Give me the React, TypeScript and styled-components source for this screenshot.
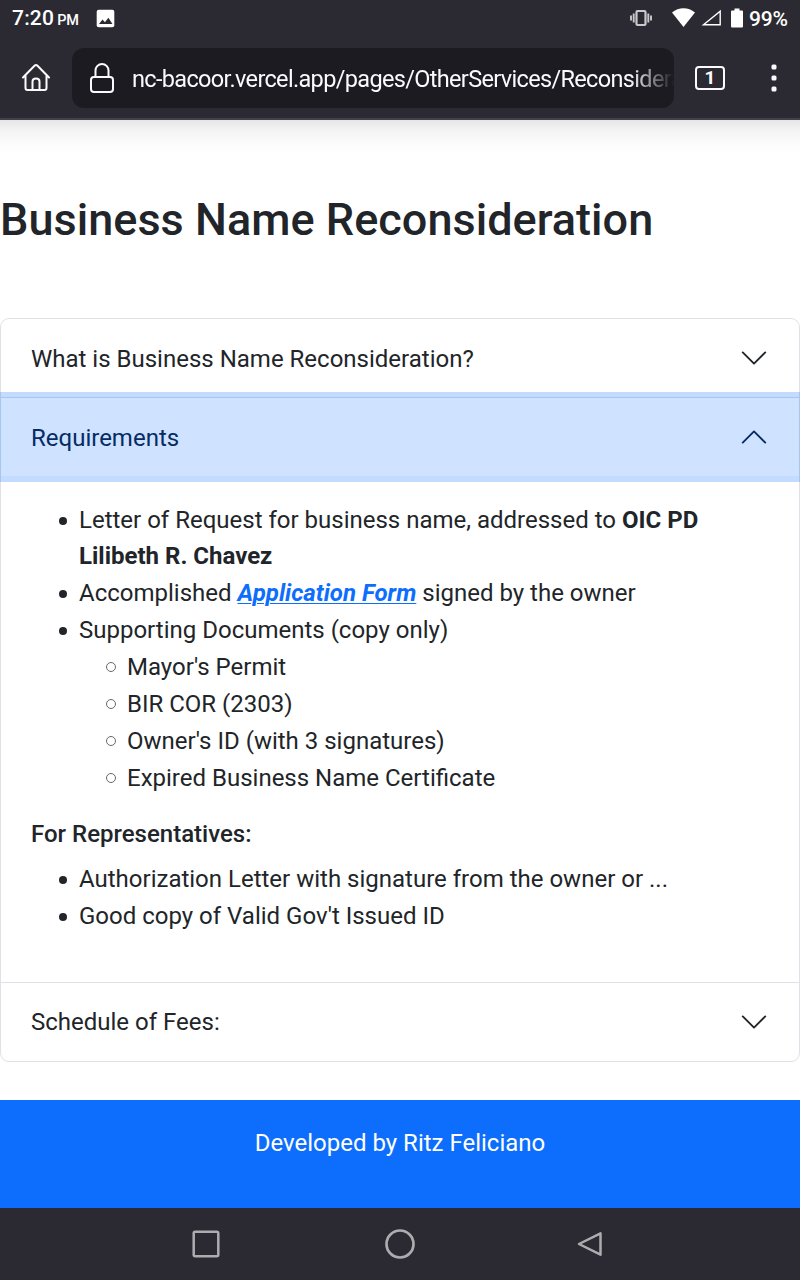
import React from 'react';
import styled, { createGlobalStyle } from 'styled-components';

const GlobalStyle = createGlobalStyle`
  *, *::before, *::after { box-sizing: border-box; }
  body {
    margin: 0;
    background: #fff;
    color: #212529;
    font-family: Roboto, sans-serif;
    font-size: 24px;
    line-height: 36px;
  }
`;

const Screen = styled.div`
  display: flex;
  flex-direction: column;
  width: 800px;
  height: 1280px;
  overflow: hidden;
`;

const StatusBar = styled.div`
  display: flex;
  align-items: center;
  height: 36px;
  padding: 0 11px 0 12px;
  background: #2b2a33;
  color: #fff;
  flex: none;
`;

const Clock = styled.div`
  width: 84px;
  font-size: 21px;
  font-weight: 500;
  line-height: 36px;
  padding-top: 3px;
  letter-spacing: 0.2px;
  white-space: nowrap;
`;

const Meridiem = styled.span`
  font-size: 14.5px;
  margin-left: 3px;
  letter-spacing: -0.2px;
`;

const StatusIcons = styled.div`
  display: flex;
  align-items: center;
  margin-left: auto;
  & > svg:nth-of-type(2) { margin-left: 20px; }
  & > svg:nth-of-type(3) { margin-left: 6px; }
  & > svg:nth-of-type(4) { margin-left: 9px; }
`;

const Battery = styled.span`
  font-size: 21px;
  font-weight: 500;
  letter-spacing: -0.2px;
  width: 40px;
  margin-left: 6px;
  padding-top: 2px;
  white-space: nowrap;
`;

const Toolbar = styled.div`
  display: flex;
  align-items: center;
  height: 84px;
  padding: 0 12px 0 18px;
  background: #2b2a33;
  border-bottom: 2px solid #42414d;
  flex: none;
`;

const AddressBar = styled.div`
  display: flex;
  align-items: center;
  width: 602px;
  height: 60px;
  margin: 2px 18px 0;
  padding-left: 15px;
  border-radius: 12px;
  background: #1c1b22;
  overflow: hidden;
`;

const Url = styled.div`
  flex: 1;
  margin-left: 15px;
  padding-top: 1px;
  overflow: hidden;
  white-space: nowrap;
  color: #fbfbfe;
  font-size: 23.5px;
  letter-spacing: -0.66px;
  mask-image: linear-gradient(to right, #000 calc(100% - 44px), transparent);
`;

const TabCounter = styled.div`
  display: flex;
  align-items: center;
  justify-content: center;
  width: 30px;
  height: 24px;
  margin: 2px 46px 0 3px;
  border: 2px solid #fbfbfe;
  border-radius: 4px;
  color: #fbfbfe;
  font: 700 19px/20px Roboto, sans-serif;
`;

const MenuDots = styled.svg`
  width: 6px;
  height: 30px;
  margin-top: 2px;
`;

const Page = styled.main`
  display: flex;
  flex-direction: column;
  flex: 1;
  min-height: 0;
  background: linear-gradient(#e6e6e6, #f5f5f5 12px, #fdfdfd 26px, #fff 36px) no-repeat top / 100% 36px;
`;

const Title = styled.h1`
  margin: 73px 0 0;
  height: 125px;
  font-size: 45px;
  font-weight: 500;
  line-height: 54px;
  letter-spacing: 0.03px;
  white-space: nowrap;
`;

const Accordion = styled.div`
  border: 1px solid #dee2e6;
  border-radius: 9px;
  flex: none;
`;

const Item = styled.section`
  & + & { border-top: 1px solid #dee2e6; }
`;

const Header = styled.button<{ $open?: boolean }>`
  display: flex;
  align-items: center;
  justify-content: space-between;
  width: 100%;
  height: 78px;
  padding: 0 30px;
  border: 0;
  border-radius: ${p => (p.$open ? '0' : '8px')};
  position: relative;
  z-index: ${p => (p.$open ? 1 : 0)};
  background: ${p => (p.$open ? '#cfe2ff' : 'transparent')};
  color: ${p => (p.$open ? '#052c65' : '#212529')};
  box-shadow: ${p => (p.$open ? '0 0 0 6px rgba(13, 110, 253, 0.25)' : 'none')};
  font: 400 24px/28px Roboto, sans-serif;
`;

const HeaderLabel = styled.span<{ $lower?: boolean }>`
  padding-top: ${p => (p.$lower ? '2px' : '0')};
`;

const Chevron = styled.svg<{ $up?: boolean }>`
  width: 30px;
  height: 30px;
  transform: ${p => (p.$up ? 'rotate(180deg)' : 'none')};
`;

const Body = styled.div`
  height: 506px;
  padding: 26px 30px 0;
`;

const List = styled.ul`
  margin: 0;
  padding-left: 48px;
  list-style: none;
`;

const Entry = styled.li`
  margin-bottom: 1px;

  &::before {
    content: '';
    display: inline-block;
    width: 8.4px;
    height: 8.4px;
    margin: 0 12.1px 0 -20.5px;
    vertical-align: 3px;
    border-radius: 50%;
    background: #212529;
  }
`;

const SubList = styled(List)`
  margin-top: 1px;

  & > ${Entry}::before {
    width: 10px;
    height: 10px;
    margin: 0 11px 0 -21px;
    vertical-align: 3px;
    border: 1px solid #65686b;
    background: transparent;
  }
`;

const FormLink = styled.a`
  color: #0d6efd;
  font-weight: 700;
  font-style: italic;
  text-decoration: underline;
  text-decoration-thickness: 1px;
  text-underline-offset: 2px;
`;

const Subheading = styled.h6`
  margin: 24px 0 12px;
  font-size: 24px;
  font-weight: 500;
  line-height: 29px;
`;

const Footer = styled.footer`
  height: 108px;
  margin-top: auto;
  padding-top: 25px;
  background: #0d6efd;
  color: #fff;
  text-align: center;
  flex: none;
`;

const NavBar = styled.nav`
  height: 72px;
  display: flex;
  background: #2b2a33;
  padding-left: 192px;
  gap: 165px;
  align-items: center;
  flex: none;

  & > :last-child { margin-left: -3px; }
`;

const Arrow = ({ up }: { up?: boolean }) => (
  <Chevron $up={up} viewBox="0 0 16 16" fill="none" stroke="currentColor" strokeLinecap="round" strokeLinejoin="round">
    <path d="m2 5 6 6 6-6" />
  </Chevron>
);

export default function App() {
  return (
    <>
      <GlobalStyle />
      <Screen>
        <StatusBar>
          <Clock>7:20<Meridiem>PM</Meridiem></Clock>
          <svg width="19" height="19" viewBox="0 0 19 19">
            <rect x="0.7" y="0.7" width="17.6" height="17.6" rx="2" fill="#fff" />
            <path d="M3 15l3.5-4.6 2.4 2.9 3.5-4.5L16.5 15z" fill="#2b2a33" />
          </svg>
          <StatusIcons>
            <svg width="22" height="18" viewBox="0 0 22 18" fill="none" stroke="#c9c9cc" strokeWidth="2.2">
              <rect x="6.5" y="2" width="9" height="14" rx="1" />
              <path d="M3.7 4.5v9M18.3 4.5v9M1 6.5v5M21 6.5v5" strokeWidth="1.9" />
            </svg>
            <svg width="23" height="20" viewBox="0 0 23 20">
              <path d="M0 4.5C6.5-1.2 16.5-1.2 23 4.5L11.5 19z" fill="#fff" />
            </svg>
            <svg width="21" height="18" viewBox="0 0 21 18">
              <path d="M2.500 15.800H19.200V2.200z" fill="none" stroke="#fff" strokeWidth="1.4" />
            </svg>
            <svg width="12" height="20" viewBox="0 0 12 20">
              <path d="M3.5 0.5h5v2H11q1 0 1 1V18.500q0 1-1 1H1q-1 0-1-1V3.500q0-1 1-1h2.500z" fill="#fff" />
            </svg>
            <Battery>99%</Battery>
          </StatusIcons>
        </StatusBar>
        <Toolbar>
          <svg width="36" height="36" viewBox="0 0 36 36" fill="none" stroke="#fbfbfe" strokeWidth="2" strokeLinecap="round" strokeLinejoin="round">
            <path d="M5 18.5 16.5 6.800q1.500-1.500 3 0L31 18.500M7.500 16.500V29q0 2 2 2h17q2 0 2-2V16.500" />
            <path d="M14.5 31V22.500q0-3 3.500-3t3.500 3V31" />
          </svg>
          <AddressBar>
            <svg width="30" height="36" viewBox="0 0 30 36" fill="none" stroke="#fbfbfe" strokeWidth="2">
              <rect x="4" y="17" width="22" height="15" rx="3" />
              <path d="M8.5 17V10.500a6.500 6.500 0 0 1 13 0V17" />
            </svg>
            <Url>nc-bacoor.vercel.app/pages/OtherServices/Reconsideration</Url>
          </AddressBar>
          <TabCounter>1</TabCounter>
          <MenuDots viewBox="0 0 6 30" fill="#fbfbfe">
            <rect x="0.5" y="1.5" width="5" height="5" rx="1.5" />
            <rect x="0.5" y="12.5" width="5" height="5" rx="1.5" />
            <rect x="0.5" y="23.5" width="5" height="5" rx="1.5" />
          </MenuDots>
        </Toolbar>
        <Page>
          <Title>Business Name Reconsideration</Title>
          <Accordion>
            <Item>
              <Header><HeaderLabel $lower>What is Business Name Reconsideration?</HeaderLabel><Arrow /></Header>
            </Item>
            <Item>
              <Header $open><HeaderLabel $lower>Requirements</HeaderLabel><Arrow up /></Header>
              <Body>
                <List>
                  <Entry>Letter of Request for business name, addressed to <b>OIC PD Lilibeth R. Chavez</b></Entry>
                  <Entry>Accomplished <FormLink href="#">Application Form</FormLink> signed by the owner</Entry>
                  <Entry>
                    Supporting Documents (copy only)
                    <SubList>
                      <Entry>Mayor's Permit</Entry>
                      <Entry>BIR COR (2303)</Entry>
                      <Entry>Owner's ID (with 3 signatures)</Entry>
                      <Entry>Expired Business Name Certificate</Entry>
                    </SubList>
                  </Entry>
                </List>
                <Subheading>For Representatives:</Subheading>
                <List>
                  <Entry>Authorization Letter with signature from the owner or ...</Entry>
                  <Entry>Good copy of Valid Gov't Issued ID</Entry>
                </List>
              </Body>
            </Item>
            <Item>
              <Header><HeaderLabel>Schedule of Fees:</HeaderLabel><Arrow /></Header>
            </Item>
          </Accordion>
          <Footer>Developed by Ritz Feliciano</Footer>
        </Page>
        <NavBar>
          <svg width="28" height="28" viewBox="0 0 28 28" fill="none" stroke="#adadb0" strokeWidth="2.5">
            <rect x="1.7" y="1.7" width="24.6" height="24.6" rx="1.5" />
          </svg>
          <svg width="30" height="30" viewBox="0 0 30 30" fill="none" stroke="#adadb0" strokeWidth="2.7">
            <circle cx="15" cy="15" r="13.5" />
          </svg>
          <svg width="26" height="26" viewBox="0 0 26 26" fill="none" stroke="#adadb0" strokeWidth="2.5" strokeLinejoin="round">
            <path d="M2 13 23.5 2.3V23.700z" />
          </svg>
        </NavBar>
      </Screen>
    </>
  );
}
